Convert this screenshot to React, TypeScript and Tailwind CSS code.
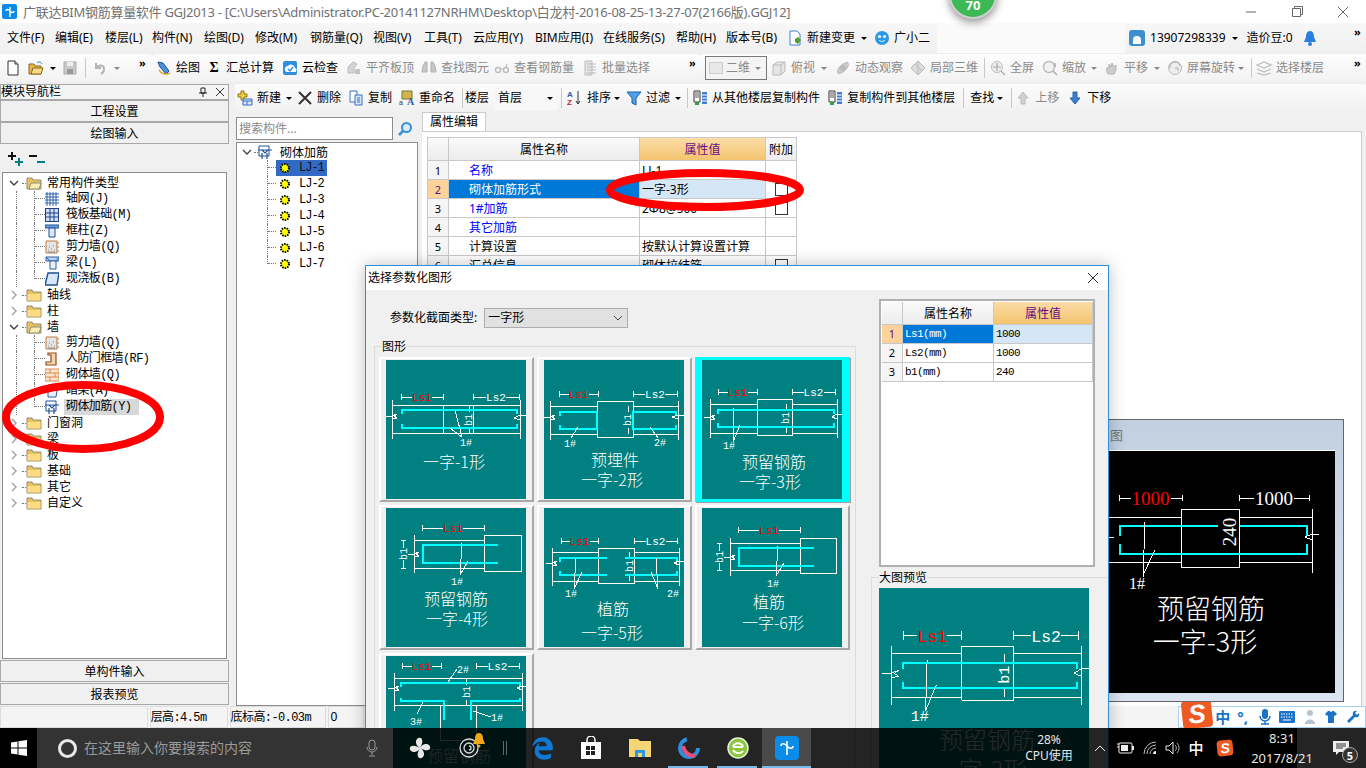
import type { ReactNode } from 'react';
import { FaEdgeLegacy } from 'react-icons/fa6';

const mono = "font-['Liberation_Mono','Noto_Sans_CJK_SC',monospace]";
const mixed = "font-['Liberation_Mono','Noto_Sans_CJK_SC',monospace] tracking-[-0.6px]";

// ---- small toolbar icons (16x16) ----
const S = ({ children }: { children: ReactNode }) => (
  <svg viewBox="0 0 16 16" className="h-4 w-4 shrink-0">{children}</svg>
);
const I = {
  doc: <S><path d="M3 1h7l3 3v11H3z" fill="#fff" stroke="#333" /><path d="M10 1v3h3" fill="#ddd" stroke="#333" /></S>,
  open: <S><path d="M1 4h5l1 2h6v8H1z" fill="#e8b64c" stroke="#8a6a20" /><path d="M3 14l2-6h10l-2 6z" fill="#f7d98a" stroke="#8a6a20" /><path d="M9 3c2-2 4-1 5 1" fill="none" stroke="#3a6fc0" /></S>,
  save: <S><path d="M2 2h12v12H2z" fill="#c9c9c9" stroke="#aaa" /><path d="M5 2h6v4H5z" fill="#eee" /><path d="M5 9h6v5H5z" fill="#999" /></S>,
  undo: <S><path d="M4 3v5h5" fill="none" stroke="#b4b4b4" strokeWidth="2" /><path d="M4 8c3-4 8-3 8 1 0 2-1 4-3 5" fill="none" stroke="#b4b4b4" strokeWidth="2" /></S>,
  draw: <S><path d="M2 2l5 1 6 8-3 3-6-7z" fill="#4d8fd8" stroke="#1e4f94" /><path d="M3 10c2 4 7 5 11 3" fill="none" stroke="#d8a030" strokeWidth="1.5" /></S>,
  cloud: <S><rect x="1" y="1" width="14" height="14" rx="2" fill="#2f8fdc" /><path d="M3 10a3 3 0 013-4 4 4 0 017 2 2 2 0 01-1 4H5a2 2 0 01-2-2z" fill="#fff" /><path d="M6 9l2 2 3-4" fill="none" stroke="#2f8fdc" strokeWidth="1.4" /></S>,
  flat: <S><path d="M2 13V7l5-5 4 2-3 4v5z" fill="#d4d4d4" stroke="#bbb" /><path d="M9 9h5v5H9z" fill="#c4c4c4" /></S>,
  find: <S><path d="M2 6l2-4h2v10H1zM14 6l-2-4h-2v10h5z" fill="#c8c8c8" stroke="#b0b0b0" /></S>,
  view: <S><circle cx="4" cy="10" r="2.5" fill="none" stroke="#bbb" strokeWidth="1.4" /><circle cx="12" cy="10" r="2.5" fill="none" stroke="#bbb" strokeWidth="1.4" /><path d="M7 9h2M12 7l1-3" stroke="#bbb" strokeWidth="1.2" /></S>,
  batch: <S><path d="M3 1h7v14H3z" fill="#e4e4e4" stroke="#bbb" /><path d="M5 4h9M5 7h9M5 10h9M5 13h9" stroke="#bbb" /></S>,
  cube: <S><path d="M2 5l4-3h8v9l-4 4H2z" fill="#e6e6e6" stroke="#bbb" /><path d="M2 5h8v10M10 5l4-3" fill="none" stroke="#bbb" /></S>,
  orbit: <S><ellipse cx="8" cy="8" rx="7" ry="3" transform="rotate(-45 8 8)" fill="#ccc" stroke="#b5b5b5" /><circle cx="8" cy="8" r="3" fill="#bbb" /></S>,
  local: <S><path d="M8 1l7 7-7 7-7-7z" fill="#ddd" stroke="#bbb" /><path d="M5 4l7 7M8 1v14" stroke="#bbb" /></S>,
  zoomAll: <S><circle cx="7" cy="7" r="5.5" fill="#eee" stroke="#bbb" /><path d="M7 3v8M3 7h8M11 11l4 4" stroke="#aaa" strokeWidth="1.2" /></S>,
  zoomDyn: <S><circle cx="7" cy="7" r="5.5" fill="#f2f2f2" stroke="#bbb" strokeWidth="1.4" /><path d="M11 11l4 4M13 3v4" stroke="#aaa" strokeWidth="1.4" /></S>,
  pan: <S><path d="M4 14c-2-3-2-6 0-7l1 1V4l2 3 1-4 2 4 2-2v5l-2 4z" fill="#ccc" stroke="#b5b5b5" /></S>,
  rotate: <S><circle cx="8" cy="8" r="6.5" fill="#eee" stroke="#bbb" /><path d="M3 8a5 5 0 0110-2M8 8h3v3" fill="none" stroke="#aaa" /></S>,
  floor: <S><path d="M1 5l7-3 7 3-7 3zM1 9l7 3 7-3M1 13l7 2 7-2" fill="none" stroke="#bcbcbc" strokeWidth="1.3" /></S>,
  add: <S><path d="M4 1h3v3h3v3H7v3H4V7H1V4h3z" fill="#f0d040" stroke="#8a7410" /><path d="M6 9h9v6H6z" fill="#d8e8f8" stroke="#3a6fc0" /><path d="M6 11h9M10 11v4" stroke="#3a6fc0" /></S>,
  del: <S><path d="M2 2l12 12M14 2L2 14" stroke="#333" strokeWidth="2" /></S>,
  copy: <S><path d="M2 1h7v11H2z" fill="#fff" stroke="#3a6fc0" /><path d="M7 5h7v10H7z" fill="#d8e8f8" stroke="#3a6fc0" /><path d="M9 8h3M9 10h3M9 12h3" stroke="#3a6fc0" /></S>,
  rename: <S><path d="M3 1h10v8H3z" fill="#d8b050" stroke="#6a7a30" /><text x="8" y="15" fontSize="10" fontWeight="700" fill="#2a5ea8" fontFamily="Liberation Serif">A</text><text x="0" y="15" fontSize="7" fill="#333" fontFamily="Liberation Sans">a</text></S>,
  sort: <S><text x="0" y="7" fontSize="8" fontWeight="700" fill="#2a5ea8" fontFamily="Liberation Sans">A</text><text x="0" y="15" fontSize="8" fontWeight="700" fill="#b03030" fontFamily="Liberation Sans">Z</text><path d="M11 1v13M9 11l2 3 2-3" fill="none" stroke="#333" /></S>,
  filter: <S><path d="M1 2h14L10 8v7l-4-2V8z" fill="#4da0e8" stroke="#1e5fa0" /></S>,
  layer: <S><path d="M2 1h6v11H2z" fill="#fff" stroke="#333" /><path d="M3 3h4M3 5h4M3 7h4" stroke="#555" /><path d="M10 2h5v12h-5z" fill="#3f7fd0" /><path d="M10 5h5M10 8h5M10 11h5" stroke="#fff" /><path d="M3 12h4v3H3z" fill="#30a040" /></S>,
  up: <S><path d="M8 2l5 6h-3v6H6V8H3z" fill="#d0d0d0" stroke="#bcbcbc" /></S>,
  down: <S><path d="M8 14l5-6h-3V2H6v6H3z" fill="#3f7fd0" stroke="#2a5ea8" /></S>,
  fileNew: <S><path d="M3 1h7l3 3v11H3z" fill="#fff" stroke="#3a7fd0" /><path d="M8 9l3-2 3 3-3 4-3-2z" fill="#50a030" /></S>,
  guang: <S><circle cx="8" cy="8" r="7" fill="#2a9ae8" /><circle cx="5.5" cy="6.5" r="1.6" fill="#fff" /><circle cx="10.5" cy="6.5" r="1.6" fill="#fff" /><path d="M5 10c2 2 4 2 6 0" fill="none" stroke="#fff" /></S>,
};

const Caret = ({ className = '', gray = false }: { className?: string; gray?: boolean }) => (
  <span className={`shrink-0 border-x-[3px] border-t-[3px] border-x-transparent ${gray ? 'border-t-[#888]' : 'border-t-black'} ${className}`} />
);
const More = ({ className = '' }: { className?: string }) => (
  <span className={`w-2 shrink-0 self-start pt-[1px] text-[11px] leading-[16px] font-bold text-black ${className}`}>»</span>
);
const Sep = ({ className = '' }: { className?: string }) => (
  <span className={`h-5 w-px shrink-0 bg-[#c8c8c8] ${className}`} />
);

function Tool({ icon, label, gray = false, className = '', caret = '' }: { icon: ReactNode; label: string; gray?: boolean; className?: string; caret?: string }) {
  return (
    <div className={`flex shrink-0 items-center gap-1 whitespace-nowrap ${className}`}>
      {icon}
      <span className={gray ? 'text-[#8a8a8a]' : 'text-black'}>{label}</span>
      {caret && <Caret className={caret} gray={gray} />}
    </div>
  );
}

// ---- rebar drawings ----
const Wire = ({ d }: { d: string }) => <path d={d} stroke="#fff" strokeWidth="1" fill="none" shapeRendering="crispEdges" vectorEffect="non-scaling-stroke" />;
const Bar = ({ d, w = 2 }: { d: string; w?: number }) => <path d={d} stroke="#00ffff" strokeWidth={w} fill="none" shapeRendering="crispEdges" vectorEffect="non-scaling-stroke" />;
function Dim({ x1, x2, y, label, red = false, size = 11, gap = 10 }: { x1: number; x2: number; y: number; label: string; red?: boolean; size?: number; gap?: number }) {
  const mid = (x1 + x2) / 2;
  return (
    <g>
      <Wire d={`M${x1} ${y - 3}V${y + 3}M${x2} ${y - 3}V${y + 3}M${x1} ${y}H${mid - gap}M${mid + gap} ${y}H${x2}`} />
      <text x={mid} y={y + size * 0.36} textAnchor="middle" fontSize={size} fill={red ? '#ff0000' : '#fff'}>{label}</text>
    </g>
  );
}
const Tag = ({ x, y, t, size = 10 }: { x: number; y: number; t: string; size?: number }) => (
  <text x={x} y={y} textAnchor="middle" fontSize={size} fill="#fff">{t}</text>
);
const Rot = ({ x, y, t, size = 10 }: { x: number; y: number; t: string; size?: number }) => (
  <text transform={`translate(${x} ${y}) rotate(-90)`} textAnchor="middle" y={size * 0.35} fontSize={size} fill="#fff">{t}</text>
);
const Cap = ({ x, y, t, size = 16 }: { x: number; y: number; t: string; size?: number }) => (
  <text x={x} y={y + size * 0.36} textAnchor="middle" fontSize={size} fill="#fff" className="font-['Noto_Sans_CJK_SC',sans-serif] font-light">{t}</text>
);
const Brk = ({ x, y }: { x: number; y: number }) => <Wire d={`M${x - 6} ${y}h6l5-2-3 2 3 2-5 1`} />;

const drawings: ReactNode[] = [
  <g key="1">
    <Dim x1={15} x2={57} y={37} label="Ls1" red />
    <Dim x1={87} x2={133} y={37} label="Ls2" />
    <Wire d="M6 45H134M6 73H134M6 40V79M134 40V79M57 45V73M87 45V73M83 45V52M83 68V73" />
    <Bar d="M16 54V50H131V54M16 64V68H131V64" />
    <Brk x={6} y={56} /><Wire d="M128 58l6-3h6M128 58l6 2" />
    <Wire d="M69 50l7 27M64 68l12 9" />
    <Rot x={82} y={60} t="b1" /><Tag x={80} y={86} t="1#" />
    <Cap x={68} y={102} t="一字-1形" />
  </g>,
  <g key="2">
    <Dim x1={15} x2={54} y={34} label="Ls1" red />
    <Dim x1={89} x2={133} y={34} label="Ls2" />
    <Wire d="M53 41H89V77H53ZM6 46H53M6 74H53M89 46H134M89 74H134M6 41V80M134 41V80M84 46V52M84 68V74" />
    <Bar d="M16 56V52H53V69H16V65M132 56V52H89V69H132V65" />
    <Brk x={6} y={57} /><Wire d="M128 57l6-2h6M128 57l6 2" />
    <Wire d="M34 67l-7 11M106 67l8 11" />
    <Rot x={83} y={60} t="b1" /><Tag x={26} y={87} t="1#" /><Tag x={116} y={86} t="2#" />
    <Cap x={71} y={100} t="预埋件" /><Cap x={68} y={120} t="一字-2形" />
  </g>,
  <g key="3">
    <Dim x1={16} x2={55} y={32} label="Ls1" red />
    <Dim x1={90} x2={133} y={32} label="Ls2" />
    <Wire d="M55 39H90V75H55ZM8 44H55M8 73H55M90 44H135M90 73H135M8 39V78M135 39V78M84 44V50M84 66V73" />
    <Bar d="M16 54V50H132V54M16 63V67H132V63" />
    <Brk x={8} y={57} /><Wire d="M130 57l5-3h5M130 57l5 2" />
    <Wire d="M32 48l-1 34M38 65l-7 17" />
    <Rot x={83} y={58} t="b1" /><Tag x={27} y={89} t="1#" />
    <Cap x={72} y={102} t="预留钢筋" /><Cap x={68} y={122} t="一字-3形" />
  </g>,
  <g key="4">
    <Dim x1={36} x2={98} y={20} label="Ls1" red />
    <Wire d="M98 27H135V63H98ZM28 32H98M28 60H98M28 27V65M15 32H20M15 60H20M17 32V40M17 52V60" />
    <Bar d="M112 37H37V55H112" />
    <Brk x={28} y={46} />
    <Wire d="M76 35l-2 32M82 53l-8 14" />
    <Rot x={17} y={46} t="b1" /><Tag x={71} y={77} t="1#" />
    <Cap x={70} y={91} t="预留钢筋" /><Cap x={71} y={111} t="一字-4形" />
  </g>,
  <g key="5">
    <Dim x1={17} x2={54} y={33} label="Ls1" red />
    <Dim x1={90} x2={133} y={33} label="Ls2" />
    <Wire d="M54 40H90V75H54ZM8 44H54M8 73H54M90 44H135M90 73H135M8 40V78M135 40V78M85 44V50M85 66V73" />
    <Bar d="M16 54V50H63M16 63V67H63M81 50H133V54M81 67H133V63" />
    <Brk x={8} y={55} /><Wire d="M130 55l5-2h5M130 55l5 2" />
    <Wire d="M32 50l-2 31M38 64l-8 17M112 50l2 31M107 64l7 17" />
    <Rot x={85} y={58} t="b1" /><Tag x={27} y={89} t="1#" /><Tag x={129} y={89} t="2#" />
    <Cap x={69} y={101} t="植筋" /><Cap x={68} y={125} t="一字-5形" />
  </g>,
  <g key="6">
    <Dim x1={36} x2={98} y={22} label="Ls1" red />
    <Wire d="M98 30H134V65H98ZM28 35H98M28 62H98M28 30V68M15 35H20M15 62H20M17 35V43M17 55V62" />
    <Bar d="M112 40H37V58H112" />
    <Brk x={28} y={49} />
    <Wire d="M76 38l-2 30M82 55l-8 13" />
    <Rot x={17} y={49} t="b1" /><Tag x={71} y={79} t="1#" />
    <Cap x={67} y={94} t="植筋" /><Cap x={71} y={115} t="一字-6形" />
  </g>,
  <g key="7">
    <Dim x1={16} x2={55} y={10} label="Ls1" red />
    <Dim x1={90} x2={133} y={10} label="Ls2" />
    <Wire d="M8 22H136M8 49H136M8 17V55M136 17V55M80 22V29M80 44V49M54 49V84H90V49" />
    <Bar d="M15 31V27H134V31M15 42V45H58V64M85 64V45H134V42" />
    <Brk x={8} y={32} /><Wire d="M131 32l5-2h5M131 32l5 2" />
    <Wire d="M62 26l9-13M37 46l-6 12M87 55l18 6" />
    <Rot x={80} y={36} t="b1" /><Tag x={77} y={17} t="2#" /><Tag x={30} y={69} t="3#" /><Tag x={111} y={65} t="1#" />
    <Cap x={73} y={100} t="预留钢筋" /><Cap x={70} y={120} t="一字-7形" />
  </g>,
];

function Teal({ index, className }: { index: number; className: string }) {
  return (
    <svg viewBox="0 0 140 139" className={`block bg-[#008080] ${mono} ${className}`}>
      {drawings[index]}
    </svg>
  );
}

function Card({ index }: { index: number }) {
  const selected = index === 2;
  return (
    <div className={selected
      ? 'flex h-[145px] w-[155px] bg-[#00ffff] pl-[7px] pt-[3px] shadow-[1px_1px_0_#a0a0a0]'
      : 'flex h-[145px] w-[155px] border-2 border-t-white border-l-white border-r-[#a8a8a8] border-b-[#a8a8a8] pl-[5px] pt-[1px]'}>
      <Teal index={index} className="h-[139px] w-[140px] shrink-0" />
    </div>
  );
}

// ---- left tree ----
const Folder = ({ open = false }: { open?: boolean }) => (
  <svg viewBox="0 0 16 14" className="h-[14px] w-4 shrink-0">
    <path d="M1 2h5l1 2h8v9H1z" fill="#e9c05c" stroke="#8f8f7a" />
    {open
      ? <path d="M3 13l2-6h10l-2 6z" fill="#fdeeb8" stroke="#8f8f7a" />
      : <path d="M1.500 6h13v6.500h-13z" fill="#fbdc80" />}
  </svg>
);
const Chevron = ({ open }: { open: boolean }) => (
  <svg viewBox="0 0 10 10" className="h-[10px] w-[10px] shrink-0">
    <path d={open ? 'M1 3l4 4 4-4' : 'M3 1l4 4-4 4'} fill="none" stroke={open ? '#444' : '#a0a0a0'} strokeWidth="1.4" />
  </svg>
);
const T = ({ children }: { children: ReactNode }) => <svg viewBox="0 0 14 14" className="h-[14px] w-[14px] shrink-0">{children}</svg>;
const Rebar = () => (
  <T>
    <path d="M1 1h10v10H1z" fill="#fff" stroke="#1e4f94" />
    <path d="M0 5h14M4 5l3 3 3-3M4 8v6M9 8v6" fill="none" stroke="#1e4f94" strokeWidth="1.2" />
  </T>
);
const TI = {
  grid: <T><path d="M0 2h14M0 5h14M0 8h14M0 11h14M2 0v14M5 0v14M8 0v14M11 0v14" stroke="#2a5ea8" /></T>,
  raft: <T><path d="M0 0h14v14H0z" fill="#cfe0f4" stroke="#1e3f84" strokeWidth="2" /><path d="M0 5h14M0 9h14M5 0v14M9 0v14" stroke="#1e3f84" /></T>,
  col: <T><path d="M0 1h14v3H0z" fill="#6fa0de" stroke="#1e4f94" /><path d="M4 4h6v9H4z" fill="#dce9f8" stroke="#1e4f94" /></T>,
  shear: <T><path d="M1 1h11v12H1z" fill="#e4e4e4" stroke="#c07a40" /><path d="M3 10h1M6 9h1M9 10h1M4 7h1M8 6h1M3 12h7" stroke="#888" /><path d="M12 3h2M12 7h2M12 11h2" stroke="#c07a40" /></T>,
  beam: <T><path d="M1 1h13v4H1z" fill="#b8d4f2" stroke="#2a5ea8" /><path d="M5 5h6v8H5z" fill="#e8f1fb" stroke="#2a5ea8" /><path d="M1 1l4 4M14 1l-3 4" stroke="#2a5ea8" /></T>,
  slab: <T><path d="M3 1h11l-2 12H0z" fill="#d8e8f8" stroke="#1e4f94" strokeWidth="1.4" /></T>,
  door: <T><path d="M3 1h8v12H1v-3h5V3H3z" fill="#f0d8b0" stroke="#9a4a18" strokeWidth="1.2" /></T>,
  brick: <T><path d="M0 1h14v12H0z" fill="#fbe4cf" stroke="#d88a50" /><path d="M0 5h14M0 9h14M5 1v4M10 5v4M5 9v4" stroke="#d88a50" /></T>,
  dark: <T><path d="M3 1h10l-2 12H3z" fill="#e8f1fb" stroke="#2a5ea8" /></T>,
};

const Dots = ({ className }: { className: string }) => <span className={`block shrink-0 border-dotted border-[#777] ${className}`} />;
// vertical tree line with a branch in the middle of the row
const Branch = ({ width, last = false }: { width: string; last?: boolean }) => (
  <span className={`block shrink-0 border-l border-dotted border-[#777] ${width} ${last ? 'h-2' : 'h-full'}`}>
    <span className="block h-2 border-b border-dotted border-[#777]" />
  </span>
);

function Root({ label, open = false }: { label: string; open?: boolean }) {
  return (
    <div className="flex h-4 items-center whitespace-nowrap pl-[6px]">
      <Chevron open={open} />
      <Dots className="ml-[3px] h-px w-[4px] border-t" />
      <Folder open={open} />
      <span className="mb-[2px] ml-[5px]">{label}</span>
    </div>
  );
}
function Leaf({ label, icon, last = false, active = false }: { label: string; icon: ReactNode; last?: boolean; active?: boolean }) {
  return (
    <div className={`flex h-4 items-stretch whitespace-nowrap ${mixed}`}>
      <Dots className="ml-[13px] w-[18px] border-l" />
      <Branch width="w-[11px]" last={last} />
      <span className="flex items-center">{icon}</span>
      <span className={`ml-[5px] px-[2px] leading-4 ${active ? 'bg-[#d8d8d8] pr-[8px]' : ''}`}>{label}</span>
    </div>
  );
}

const SideButton = ({ label }: { label: string }) => (
  <div className="flex h-[22px] shrink-0 items-center justify-center border border-[#a8a8a8] bg-[#f0f0f0] pt-[2px]">{label}</div>
);

// ---- property grid ----
const gridRows: { name: string; value: string; blue?: boolean; check?: boolean; active?: boolean }[] = [
  { name: '名称', value: 'LJ-1', blue: true },
  { name: '砌体加筋形式', value: '一字-3形', blue: true, check: true, active: true },
  { name: '1#加筋', value: '2Φ8@500', blue: true, check: true },
  { name: '其它加筋', value: '', blue: true },
  { name: '计算设置', value: '按默认计算设置计算' },
  { name: '汇总信息', value: '砌体拉结筋', check: true },
];

const menus = [
  { t: '文件(F)', w: 'w-[48px]' }, { t: '编辑(E)', w: 'w-[50px]' }, { t: '楼层(L)', w: 'w-[47px]' }, { t: '构件(N)', w: 'w-[52px]' },
  { t: '绘图(D)', w: 'w-[51px]' }, { t: '修改(M)', w: 'w-[55px]' }, { t: '钢筋量(Q)', w: 'w-[63px]' }, { t: '视图(V)', w: 'w-[51px]' },
  { t: '工具(T)', w: 'w-[49px]' }, { t: '云应用(Y)', w: 'w-[62px]' }, { t: 'BIM应用(I)', w: 'w-[68px]' }, { t: '在线服务(S)', w: 'w-[73px]' },
  { t: '帮助(H)', w: 'w-[50px]' }, { t: '版本号(B)', w: 'w-[53px]' },
];

const headCell = 'flex items-center justify-center border-r border-b border-[#c8c8c8] bg-gradient-to-b from-[#fafafa] to-[#ececec] pt-[2px]';
const valueHead = 'flex items-center justify-center border-r border-b border-[#c8c8c8] bg-gradient-to-b from-[#fbdca6] to-[#f3c46e] pt-[2px] text-[#6a0a80]';

// ---- taskbar ----
const Tray = ({ children, className = '' }: { children: ReactNode; className?: string }) => (
  <div className={`flex h-10 shrink-0 items-center justify-center ${className}`}>{children}</div>
);
const SLogo = ({ className = '', text = 'text-[15px]' }: { className?: string; text?: string }) => (
  <span className={`flex -rotate-6 items-center justify-center rounded-[4px] bg-[#ee5a24] font-['Liberation_Sans',sans-serif] font-bold italic leading-none text-white ${text} ${className}`}>S</span>
);

export default function App() {
  return (
    <div className="relative flex h-[768px] w-[1366px] flex-col overflow-hidden bg-[#f0f0f0] font-['Noto_Sans','Noto_Sans_CJK_SC',sans-serif] text-[12px] leading-4 text-black">
      {/* title bar */}
      <div className="flex h-[23px] shrink-0 items-center bg-white pl-[2px]">
        <span className="flex h-[15px] w-[15px] items-center justify-center rounded-[2px] bg-[#0c8ce9]">
          <svg viewBox="0 0 12 12" className="h-3 w-3"><path d="M6 1v10M2 5c0-2 3-2 4 0s4 2 4 0" fill="none" stroke="#fff" strokeWidth="1.4" /></svg>
        </span>
        <span className="ml-[6px] whitespace-nowrap text-[13px] tracking-[-0.28px] text-[#707070]">广联达BIM钢筋算量软件 GGJ2013 - [C:\Users\Administrator.PC-20141127NRHM\Desktop\白龙村-2016-08-25-13-27-07(2166版).GGJ12]</span>
        <div className="ml-auto flex h-full items-center text-[#777]">
          <svg viewBox="0 0 46 23" className="h-[23px] w-[46px]"><path d="M18 12h10" stroke="#666" /></svg>
          <svg viewBox="0 0 46 23" className="h-[23px] w-[46px]"><path d="M18.500 8.500h8v8h-8zM20.500 8.500v-2h8v8h-2" fill="none" stroke="#666" /></svg>
          <svg viewBox="0 0 46 23" className="h-[23px] w-[46px]"><path d="M18 7l10 10M28 7L18 17" stroke="#666" /></svg>
        </div>
      </div>

      {/* menu bar */}
      <div className="flex h-[30px] shrink-0 items-center whitespace-nowrap bg-gradient-to-b from-[#f7f7f7] to-[#f0f0f0] pl-[7px]">
        {menus.map((m) => (
          <span key={m.t} className={`shrink-0 ${m.w}`}>{m.t}</span>
        ))}
        <span className="ml-[8px] flex items-center gap-1">{I.fileNew}<span>新建变更</span><Caret className="ml-[2px]" /></span>
        <span className="ml-[7px] flex items-center gap-1">{I.guang}<span>广小二</span></span>
        <div className="ml-[7px] h-full w-[188px] bg-[#fafafa]" />
        <span className="ml-[4px] flex items-center gap-[5px]">
          <span className="flex h-4 w-4 items-end justify-center rounded-[3px] bg-[#3f8fd0]">
            <span className="mb-[2px] h-[8px] w-[8px] rounded-t-full bg-white" />
          </span>
          <span>13907298339</span>
          <Caret className="ml-[1px]" />
        </span>
        <span className="ml-[9px]">造价豆:0</span>
        <svg viewBox="0 0 14 16" className="ml-[10px] h-4 w-[14px]"><path d="M7 1c3 0 4 3 4 6l2 5H1l2-5c0-3 1-6 4-6z" fill="#2a7fe0" /><circle cx="7" cy="14" r="2" fill="#2a7fe0" /></svg>
        <More className="ml-auto mr-[4px]" />
      </div>

      {/* main toolbar */}
      <div className="flex h-[30px] shrink-0 items-center bg-[#ededed]">
        <div className="flex h-[28px] w-[152px] shrink-0 items-center rounded-r-[3px] bg-gradient-to-b from-[#fdfdfd] to-[#f2f2f2] pl-[5px]">
          {I.doc}
          <span className="ml-[7px]">{I.open}</span>
          <Caret className="ml-[6px]" />
          <span className="ml-[6px]">{I.save}</span>
          <Sep className="ml-[7px]" />
          <span className="ml-[6px]">{I.undo}</span>
          <Caret className="ml-[6px]" gray />
          <More className="ml-[19px]" />
        </div>
        <div className="flex h-[28px] w-[548px] shrink-0 items-center rounded-[3px] bg-gradient-to-b from-[#fdfdfd] to-[#f2f2f2] pl-[4px]">
          <Tool icon={I.draw} label="绘图" />
          <Tool className="ml-[6px]" icon={<span className="w-4 text-center font-['Liberation_Serif',serif] text-[14px] font-bold">Σ</span>} label="汇总计算" />
          <Tool className="ml-[8px]" icon={I.cloud} label="云检查" />
          <Tool className="ml-[8px]" icon={I.flat} label="平齐板顶" gray />
          <Tool className="ml-[7px]" icon={I.find} label="查找图元" gray />
          <Tool className="ml-[5px]" icon={I.view} label="查看钢筋量" gray />
          <Tool className="ml-[8px]" icon={I.batch} label="批量选择" gray />
          <More className="ml-[39px]" />
        </div>
        <div className="flex h-[28px] flex-1 items-center rounded-l-[3px] bg-gradient-to-b from-[#fdfdfd] to-[#f2f2f2] pl-[5px]">
          <div className="flex h-[24px] w-[62px] shrink-0 items-center border border-[#777] bg-[#f4f4f4] pl-[3px]">
            <span className="h-3 w-[14px] border border-[#ccc] bg-[#e8e8e8]" />
            <span className="ml-[3px] text-[#8a8a8a]">二维</span>
            <Caret className="ml-[5px]" gray />
          </div>
          <Tool className="ml-[4px]" icon={I.cube} label="俯视" gray caret="ml-[2px]" />
          <Tool className="ml-[8px]" icon={I.orbit} label="动态观察" gray />
          <Tool className="ml-[7px]" icon={I.local} label="局部三维" gray />
          <Sep className="ml-[6px]" />
          <Tool className="ml-[5px]" icon={I.zoomAll} label="全屏" gray />
          <Tool className="ml-[8px]" icon={I.zoomDyn} label="缩放" gray caret="ml-[1px]" />
          <Tool className="ml-[7px]" icon={I.pan} label="平移" gray caret="ml-[2px]" />
          <Tool className="ml-[7px]" icon={I.rotate} label="屏幕旋转" gray caret="-ml-[1px]" />
          <Sep className="ml-[7px]" />
          <Tool className="ml-[4px]" icon={I.floor} label="选择楼层" gray />
          <More className="ml-auto mr-[4px]" />
        </div>
      </div>

      {/* body */}
      <div className="flex h-[623px] shrink-0">
        {/* navigation panel */}
        <div className="flex w-[229px] shrink-0 flex-col pt-[1px]">
          <div className="flex h-[16px] shrink-0 items-center justify-between border border-[#a8a8a8] bg-[#f4f4f4] pr-[4px]">
            <span>模块导航栏</span>
            <span className="flex items-center gap-[9px]">
              <svg viewBox="0 0 8 10" className="h-[10px] w-2"><path d="M2 1h4v5H2zM0 6h8M4 6v4" fill="none" stroke="#222" /></svg>
              <svg viewBox="0 0 8 8" className="h-2 w-2"><path d="M0 0l8 8M8 0L0 8" stroke="#333" /></svg>
            </span>
          </div>
          <SideButton label="工程设置" />
          <SideButton label="绘图输入" />
          <div className="flex h-[28px] shrink-0 items-center gap-[3px] pl-[7px]">
            <svg viewBox="0 0 18 16" className="h-4 w-[18px]"><path d="M5 2v8M1 6h8" stroke="#111" strokeWidth="2" /><path d="M12 8v8M8 12h8" stroke="#008080" strokeWidth="2" /></svg>
            <svg viewBox="0 0 18 16" className="h-4 w-[18px]"><path d="M1 6h8" stroke="#111" strokeWidth="2" /><path d="M9 12h8" stroke="#008080" strokeWidth="2" /></svg>
          </div>
          <div className="mx-[2px] flex-1 border border-[#8c8c8c] bg-white pt-[2px] font-['Noto_Sans_CJK_SC',sans-serif]">
            <Root label="常用构件类型" open />
            <Leaf label="轴网(J)" icon={TI.grid} />
            <Leaf label="筏板基础(M)" icon={TI.raft} />
            <Leaf label="框柱(Z)" icon={TI.col} />
            <Leaf label="剪力墙(Q)" icon={TI.shear} />
            <Leaf label="梁(L)" icon={TI.beam} />
            <Leaf label="现浇板(B)" icon={TI.slab} last />
            <Root label="轴线" />
            <Root label="柱" />
            <Root label="墙" open />
            <Leaf label="剪力墙(Q)" icon={TI.shear} />
            <Leaf label="人防门框墙(RF)" icon={TI.door} />
            <Leaf label="砌体墙(Q)" icon={TI.brick} />
            <Leaf label="暗梁(A)" icon={TI.dark} />
            <Leaf label="砌体加筋(Y)" icon={<Rebar />} last active />
            <Root label="门窗洞" />
            <Root label="梁" />
            <Root label="板" />
            <Root label="基础" />
            <Root label="其它" />
            <Root label="自定义" />
          </div>
          <div className="mt-[1px] flex flex-col gap-px">
            <SideButton label="单构件输入" />
            <SideButton label="报表预览" />
          </div>
          <div className="h-px" />
        </div>

        {/* work area */}
        <div className="flex min-w-0 flex-1 flex-col pl-[7px] pt-[1px]">
          {/* secondary toolbar */}
          <div className="-ml-[1px] flex h-[28px] shrink-0 items-center rounded-[2px] bg-gradient-to-b from-[#fcfcfc] to-[#f1f1f1] pl-[2px]">
            <Tool icon={I.add} label="新建" caret="ml-[1px]" />
            <Tool className="ml-[5px]" icon={I.del} label="删除" />
            <Tool className="ml-[7px]" icon={I.copy} label="复制" />
            <Tool className="ml-[7px]" icon={I.rename} label="重命名" />
            <Sep className="ml-[7px]" />
            <span className="ml-[2px]">楼层</span>
            <div className="ml-[6px] flex h-[24px] w-[62px] shrink-0 items-center bg-[#f8f8f8] pl-[3px]">
              <span>首层</span>
              <Caret className="ml-[25px]" />
            </div>
            <Sep className="ml-[4px]" />
            <Tool className="ml-[5px]" icon={I.sort} label="排序" caret="-ml-[1px]" />
            <Tool className="ml-[6px]" icon={I.filter} label="过滤" caret="ml-[1px]" />
            <Sep className="ml-[6px]" />
            <Tool className="ml-[4px]" icon={I.layer} label="从其他楼层复制构件" />
            <Tool className="ml-[7px]" icon={I.layer} label="复制构件到其他楼层" />
            <Sep className="ml-[8px]" />
            <span className="ml-[6px]">查找</span>
            <Caret className="ml-[3px]" />
            <Sep className="ml-[8px]" />
            <Tool className="ml-[3px]" icon={I.up} label="上移" gray />
            <Tool className="ml-[8px]" icon={I.down} label="下移" />
          </div>

          <div className="flex min-h-0 flex-1">
            {/* component list */}
            <div className="flex w-[182px] shrink-0 flex-col">
              <div className="flex h-[30px] shrink-0 items-start pt-[5px]">
                <div className="flex h-[23px] w-[157px] items-center border border-[#8c8c8c] bg-white pl-[2px] text-[#8a8a8a]">搜索构件...</div>
                <svg viewBox="0 0 16 16" className="ml-[4px] mt-[4px] h-4 w-4"><circle cx="9.500" cy="6.500" r="4.500" fill="#d8ecfb" stroke="#3a8fd8" strokeWidth="2" /><path d="M6 10l-4 4" stroke="#3a8fd8" strokeWidth="2.500" /></svg>
              </div>
              <div className="flex-1 border border-[#8c8c8c] bg-white pt-[1px]">
                <div className="flex h-4 items-center whitespace-nowrap pl-[5px]">
                  <Chevron open />
                  <Dots className="ml-[2px] h-px w-[4px] border-t" />
                  <Rebar />
                  <span className="ml-[8px] font-['Noto_Sans_CJK_SC',sans-serif]">砌体加筋</span>
                </div>
                {[1, 2, 3, 4, 5, 6, 7].map((n) => (
                  <div key={n} className="flex h-4 items-stretch pl-[30px]">
                    <Branch width="w-[9px]" last={n === 7} />
                    <div className={`flex w-[51px] items-center pl-[3px] ${n === 1 ? 'bg-[#316ac5]' : ''}`}>
                      <svg viewBox="0 0 12 12" className="h-3 w-3 shrink-0"><circle cx="6" cy="6" r="4" fill="#ffff00" stroke="#000" strokeDasharray="1.500 1" strokeWidth="2" /></svg>
                      <span className={`ml-[8px] ${mono} tracking-[-1px] ${n === 1 ? 'text-[#111]' : ''}`}>LJ-{n}</span>
                    </div>
                  </div>
                ))}
              </div>
            </div>

            {/* property editor */}
            <div className="ml-[4px] flex min-w-0 flex-1 flex-col pr-[4px]">
              <div className="flex h-[20px] shrink-0 items-end border-b border-[#ccc]">
                <div className="flex h-[19px] w-[64px] items-center justify-center border-x border-t border-[#ccc] bg-white">属性编辑</div>
              </div>
              <div className="flex-1 border-r border-[#ccc] bg-white pl-[5px] pt-[5px]">
                <div className="grid w-[370px] grid-cols-[21px_191px_126px_31px] grid-rows-[23px_repeat(6,19px)] border-l border-t border-[#c8c8c8]">
                  <div className={headCell} />
                  <div className={headCell}>属性名称</div>
                  <div className={valueHead}>属性值</div>
                  <div className={headCell}>附加</div>
                  {gridRows.map((r, i) => (
                    <div key={r.name} className="contents">
                      <div className={`flex items-center justify-center border-r border-b border-[#c8c8c8] pt-[2px] text-[11px] ${r.active ? 'bg-[#fad29a] text-[#6a0a80]' : 'bg-[#f5f5f5]'}`}>{i + 1}</div>
                      <div className={`flex items-center border-r border-b border-[#c8c8c8] pl-[20px] pt-[2px] ${r.active ? 'bg-[#0078d7] text-white' : r.blue ? 'text-[#0000ff]' : ''}`}>{r.name}</div>
                      <div className={`flex items-center border-r border-b border-[#c8c8c8] pl-[2px] pt-[2px] ${r.active ? 'bg-[#d5e7f7]' : ''}`}>{r.value}</div>
                      <div className="flex items-center justify-center border-r border-b border-[#c8c8c8]">
                        {r.check && <span className="h-[13px] w-[13px] border border-[#333] bg-white" />}
                      </div>
                    </div>
                  ))}
                </div>
              </div>
            </div>
          </div>
        </div>
      </div>

      {/* status bar */}
      <div className="flex h-[22px] shrink-0 items-stretch gap-[2px] bg-[#f4f4f4]">
        <div className="w-[148px] border border-[#dcdcdc]" />
        <div className={`flex w-[78px] items-center border border-[#dcdcdc] pt-[1px] ${mixed}`}>层高:4.5m</div>
        <div className={`flex w-[97px] items-center border border-[#dcdcdc] pt-[1px] ${mixed}`}>底标高:-0.03m</div>
        <div className="flex w-[36px] items-center border border-[#dcdcdc] pl-[1px]">0</div>
        <div className="ml-[812px] flex w-[188px] items-center border border-[#a8d0f0] bg-white pl-[3px] text-[#1a73c8]">
          <SLogo className="-mt-[6px] h-[28px] w-[30px] shrink-0" text="text-[26px]" />
          <span className="ml-[3px] w-4 text-[15px] font-bold">中</span>
          <span className="ml-[6px] w-[14px] text-[15px] font-bold leading-3">°,</span>
          <svg viewBox="0 0 14 16" className="ml-[7px] h-4 w-[14px] shrink-0"><rect x="4" y="0" width="6" height="10" rx="3" fill="#1a73c8" /><path d="M2 7a5 5 0 0010 0M7 12v3M3 15h8" fill="none" stroke="#1a73c8" strokeWidth="1.500" /></svg>
          <svg viewBox="0 0 16 12" className="ml-[7px] h-3 w-4 shrink-0"><rect width="16" height="12" rx="1" fill="#1a73c8" /><path d="M2 3h12M2 6h12" stroke="#fff" strokeDasharray="1.500 1" /><path d="M4 9h8" stroke="#fff" /></svg>
          <svg viewBox="0 0 16 16" className="ml-[8px] h-4 w-4 shrink-0"><circle cx="7" cy="4" r="3" fill="#b8c4d0" /><path d="M2 15c0-6 10-6 10 0z" fill="#b8c4d0" /></svg>
          <svg viewBox="0 0 14 14" className="ml-[5px] h-[14px] w-[14px] shrink-0"><path d="M4 1L1 4l2 2 1-1v8h6V5l1 1 2-2-3-3H8a1 1 0 01-2 0z" fill="#1a73c8" /></svg>
          <svg viewBox="0 0 14 14" className="ml-[8px] h-[14px] w-[14px] shrink-0"><path d="M1 11l6-6a3 3 0 014-4l-2 2 2 2 2-2a3 3 0 01-4 4l-6 6z" fill="#1a73c8" /></svg>
        </div>
      </div>
      <div className="h-10 shrink-0" />

      {/* big preview window behind the dialog */}
      <div className="absolute left-[1000px] top-[419px] flex h-[283px] w-[344px] flex-col border border-[#666] bg-gradient-to-b from-[#c2d1e1] to-[#dbe5f1] pb-[8px] pr-[8px]">
        <div className="flex h-[30px] shrink-0 items-center justify-start pl-[109px] text-[13px] text-[#777]">图</div>
        <div className="flex flex-1 justify-end border-t border-white bg-black">
          <svg viewBox="0 0 226 242" className="h-[242px] w-[226px] overflow-hidden font-['Liberation_Serif','Noto_Sans_CJK_SC',serif]">
            <Dim x1={10} x2={73} y={47} label="1000" red size={19} gap={20} />
            <Dim x1={130} x2={200} y={47} label="1000" size={19} gap={20} />
            <Wire d="M72 58H130V116H72ZM0 66H72M130 66H203M0 111H72M130 111H203M203 58V122" />
            <Bar d="M11 85V75H109M131 75H198V85M11 93V103H198V93" />
            <Wire d="M36 71l-2 56M46 99l-12 25M196 86l7-3h7M196 86l7 3M0 86h5" />
            <Rot x={120} y={81} t="240" size={19} />
            <Tag x={28} y={138} t="1#" size={16} />
            <Cap x={102} y={158} t="预留钢筋" size={27} />
            <Cap x={96} y={191} t="一字-3形" size={27} />
          </svg>
        </div>
      </div>

      {/* parameter dialog */}
      <div className="absolute left-[365px] top-[265px] flex h-[540px] w-[744px] flex-col border-x border-t border-[#2b8fe0] bg-[#f0f0f0] shadow-[0_0_16px_rgba(0,0,0,0.25)]">
        <div className="flex h-[24px] shrink-0 items-center justify-between bg-white pl-[2px] pr-[10px]">
          <span>选择参数化图形</span>
          <svg viewBox="0 0 10 10" className="h-[10px] w-[10px]"><path d="M0 0l10 10M10 0L0 10" stroke="#333" /></svg>
        </div>
        <div className="flex min-h-0 flex-1">
          <div className="w-[492px] shrink-0 pl-[8px]">
            <div className="flex h-[38px] items-center pl-[16px] pt-[18px]">
              <span>参数化截面类型:</span>
              <div className="ml-[7px] flex h-[20px] w-[144px] items-center justify-between border border-[#adadad] bg-[#e1e1e1] pl-[3px] pr-[4px]">
                <span>一字形</span>
                <svg viewBox="0 0 10 6" className="h-[6px] w-[10px]"><path d="M1 1l4 4 4-4" fill="none" stroke="#444" /></svg>
              </div>
            </div>
            <div className="relative mt-[18px] h-[440px] w-[482px] border border-[#dcdcdc] pl-[4px] pt-[10px]">
              <span className="absolute -top-[8px] left-[6px] bg-[#f0f0f0] px-[1px]">图形</span>
              <div className="grid w-[471px] grid-cols-[repeat(3,155px)] gap-x-[3px] gap-y-[3px]">
                {[0, 1, 2, 3, 4, 5, 6].map((i) => <Card key={i} index={i} />)}
              </div>
            </div>
          </div>
          <div className="min-w-0 flex-1 pl-[13px] pt-[9px]">
            <div className="ml-[8px] h-[268px] w-[216px] border-2 border-[#b0b0b0] bg-white p-[1px]">
              <div className="grid w-[211px] grid-cols-[21px_91px_99px] grid-rows-[23px_repeat(3,19px)]">
                <div className={headCell} />
                <div className={headCell}>属性名称</div>
                <div className={valueHead}>属性值</div>
                {[['Ls1(mm)', '1000'], ['Ls2(mm)', '1000'], ['b1(mm)', '240']].map(([k, v], i) => (
                  <div key={k} className="contents">
                    <div className={`flex items-center justify-center border-r border-b border-[#c8c8c8] text-[11px] ${i === 0 ? 'bg-[#fad29a] text-[#6a0a80]' : 'bg-[#f5f5f5]'}`}>{i + 1}</div>
                    <div className={`flex items-center border-r border-b border-[#c8c8c8] pl-[2px] ${mono} text-[11px] tracking-[-0.6px] ${i === 0 ? 'bg-[#0078d7] text-white' : ''}`}>{k}</div>
                    <div className={`flex items-center border-r border-b border-[#c8c8c8] pl-[2px] ${mono} text-[11px] tracking-[-0.6px] ${i === 0 ? 'bg-[#d5e7f7]' : ''}`}>{v}</div>
                  </div>
                ))}
              </div>
            </div>
            <div className="relative mt-[10px] h-[200px] border-l border-t border-[#dcdcdc] pl-[7px] pt-[10px]">
              <span className="absolute -top-[8px] left-[7px] bg-[#f0f0f0]">大图预览</span>
              <Teal index={2} className="h-[208px] w-[210px]" />
            </div>
          </div>
        </div>
      </div>

      {/* red hand drawn marks */}
      <svg className="pointer-events-none absolute left-0 top-0 h-[768px] w-[1366px]" viewBox="0 0 1366 768">
        <ellipse cx="83" cy="417" rx="77" ry="32" fill="none" stroke="#ff0000" strokeWidth="8" />
        <ellipse cx="705" cy="190" rx="95" ry="17" fill="none" stroke="#ff0000" strokeWidth="8" />
      </svg>

      {/* floating speed ball */}
      <div className="absolute left-[949px] -top-[29px] flex h-[48px] w-[48px] items-end justify-center rounded-full border-2 border-[#d0d0d0] bg-[#3cb854] pb-[4px] text-[13px] font-bold leading-4 text-white shadow-[0_3px_8px_rgba(0,0,0,0.45)]">70</div>

      {/* taskbar */}
      <div className="absolute bottom-0 left-[1109px] h-10 w-[188px] bg-black" />
      <div className="absolute bottom-0 left-0 flex h-10 w-[1366px] items-center bg-black/85 text-white">
        <Tray className="w-[37px] bg-black">
          <svg viewBox="0 0 16 16" className="h-4 w-4"><path d="M0 2.500l6.500-1v6H0zM7.500 1.300L16 0v7.500H7.500zM0 8.500h6.500v6L0 13.500zM7.500 8.500H16V16l-8.500-1.300z" fill="#fff" /></svg>
        </Tray>
        <div className="flex h-10 w-[356px] shrink-0 items-center bg-[#333] pl-[21px] text-[14px] text-[#9a9a9a]">
          <span className="h-[19px] w-[19px] rounded-full border-[3px] border-[#e8e8e8]" />
          <span className="ml-[7px]">在这里输入你要搜索的内容</span>
          <svg viewBox="0 0 12 18" className="ml-[114px] h-[18px] w-3"><rect x="3" y="1" width="6" height="10" rx="3" fill="none" stroke="#999" /><path d="M1 8a5 5 0 0010 0M6 13v3M3 17h6" fill="none" stroke="#999" /></svg>
        </div>
        <Tray className="ml-[2px] w-[49px]">
          <svg viewBox="0 0 24 24" className="h-[22px] w-[22px]"><path d="M12 12C8 10 6 5 9 2s9 0 3 10zM12 12c2-4 7-6 10-3s0 9-10 3zM12 12c4 2 6 7 3 10s-9 0-3-10zM12 12c-2 4-7 6-10 3s0-9 10-3z" fill="#e8e8e8" /></svg>
        </Tray>
        <Tray className="relative w-[49px]">
          <svg viewBox="0 0 22 22" className="h-[22px] w-[22px]"><path d="M11 20a9 9 0 110-18 9 9 0 010 18zm0-4a5 5 0 100-10 5 5 0 000 10zm0-3a2 2 0 100-4" fill="none" stroke="#ddd" strokeWidth="1.300" /></svg>
          <svg viewBox="0 0 14 16" className="absolute left-[28px] top-[4px] h-4 w-[14px]"><path d="M7 1c3 0 4 3 4 6l2 5H1l2-5c0-3 1-6 4-6z" fill="#f0a818" /><circle cx="7" cy="14" r="1.500" fill="#f0a818" /></svg>
        </Tray>
        <Tray className="w-[26px] justify-start pl-[10px]"><span className="h-[14px] w-[4px] border-x border-[#666]" /></Tray>
        <Tray className="-ml-[1px] w-[48px]"><FaEdgeLegacy className="h-[23px] w-[23px] text-[#0f78d4]" /></Tray>
        <Tray className="w-[49px]">
          <svg viewBox="0 0 22 24" className="h-6 w-[22px]"><path d="M1 6h20v17H1z" fill="#fff" /><path d="M7 8V4a4 4 0 018 0v4" fill="none" stroke="#fff" strokeWidth="1.500" /><path d="M6 10h4v4H6zM11 10h4v4h-4zM6 15h4v4H6zM11 15h4v4h-4z" fill="#222" /></svg>
        </Tray>
        <Tray className="w-[49px]">
          <svg viewBox="0 0 22 20" className="h-5 w-[22px]"><path d="M0 1h9l2 2h11v16H0z" fill="#f4d774" /><path d="M6 12h10v7H6z" fill="#2a9ae8" /><path d="M9 15h4v4H9z" fill="#f4d774" /></svg>
        </Tray>
        <Tray className="relative w-[49px]">
          <svg viewBox="0 0 24 24" className="h-6 w-6"><circle cx="12" cy="12" r="9" fill="none" stroke="#2a8fe0" strokeWidth="4" strokeDasharray="40 17" /><path d="M6 10c2 8 8 11 12 9" fill="none" stroke="#e8507a" strokeWidth="4" /></svg>
          <span className="absolute bottom-0 left-[4px] h-[2px] w-[40px] bg-[#76b9ed]" />
        </Tray>
        <Tray className="relative w-[49px]">
          <svg viewBox="0 0 24 24" className="h-6 w-6"><circle cx="12" cy="12" r="10" fill="#8cc63f" stroke="#e8f4d4" strokeWidth="1.500" /><path d="M7 11h10M7 14c2 4 8 4 10 1M7 11c1-5 9-5 10 0" fill="none" stroke="#fff" strokeWidth="2" /></svg>
          <span className="absolute bottom-0 left-[4px] h-[2px] w-[40px] bg-[#76b9ed]" />
        </Tray>
        <Tray className="relative w-[49px] bg-[#4a4a4a]">
          <span className="flex h-6 w-6 items-center justify-center rounded-[4px] bg-[#0c8ce9]">
            <svg viewBox="0 0 16 16" className="h-4 w-4"><path d="M8 1v14M2 6c0-3 4-3 6 0s6 3 6 0" fill="none" stroke="#fff" strokeWidth="1.600" /></svg>
          </span>
          <span className="absolute bottom-0 left-0 h-[2px] w-full bg-[#76b9ed]" />
        </Tray>

        <div className="ml-[213px] flex w-[50px] shrink-0 flex-col items-center text-[12px] leading-[16px] text-[#e6e6e6]">
          <span>28%</span>
          <span>CPU使用</span>
        </div>
        <Tray className="ml-[14px] w-[24px]">
          <svg viewBox="0 0 12 7" className="h-[7px] w-3"><path d="M1 6l5-5 5 5" fill="none" stroke="#eee" /></svg>
        </Tray>
        <Tray className="w-[26px]">
          <svg viewBox="0 0 18 12" className="h-3 w-[18px]"><path d="M1 2h2M1 5h2" stroke="#eee" /><rect x="3" y="1" width="13" height="10" rx="1" fill="none" stroke="#eee" /><path d="M5 3h7v6H5zM16 4h2v4h-2z" fill="#eee" /></svg>
        </Tray>
        <Tray className="w-[24px]">
          <svg viewBox="0 0 16 16" className="h-4 w-4"><path d="M2 14a12 12 0 0112-12M5 14a9 9 0 019-9M8 14a6 6 0 016-6" fill="none" stroke="#bbb" /><path d="M11 14a3 3 0 013-3v3z" fill="#eee" /></svg>
        </Tray>
        <Tray className="w-[22px]">
          <svg viewBox="0 0 16 16" className="h-4 w-4"><path d="M1 6h3l4-4v12l-4-4H1z" fill="none" stroke="#eee" /><path d="M10 5a4 4 0 010 6M12 3a7 7 0 010 10" fill="none" stroke="#aaa" /></svg>
        </Tray>
        <Tray className="w-[24px] text-[15px] font-medium">中</Tray>
        <Tray className="w-[34px]"><SLogo className="h-[16px] w-[16px]" text="text-[14px]" /></Tray>
        <div className="ml-[8px] flex w-[64px] shrink-0 flex-col items-center text-[13px] leading-[20px] text-[#e6e6e6]">
          <span>8:31</span>
          <span className="whitespace-nowrap">2017/8/21</span>
        </div>
        <div className="relative ml-[7px] flex h-10 w-[40px] shrink-0 items-center justify-center">
          <svg viewBox="0 0 16 16" className="h-4 w-4"><path d="M0 1h16v11H6l-3 3v-3H0z" fill="#eee" /><path d="M3 4h10M3 6h10M3 8h7" stroke="#333" /></svg>
          <span className="absolute left-[21px] top-[19px] flex h-[16px] w-[16px] items-center justify-center rounded-full border border-[#aaa] bg-[#333] text-[11px] font-bold leading-none">5</span>
        </div>
      </div>
    </div>
  );
}
